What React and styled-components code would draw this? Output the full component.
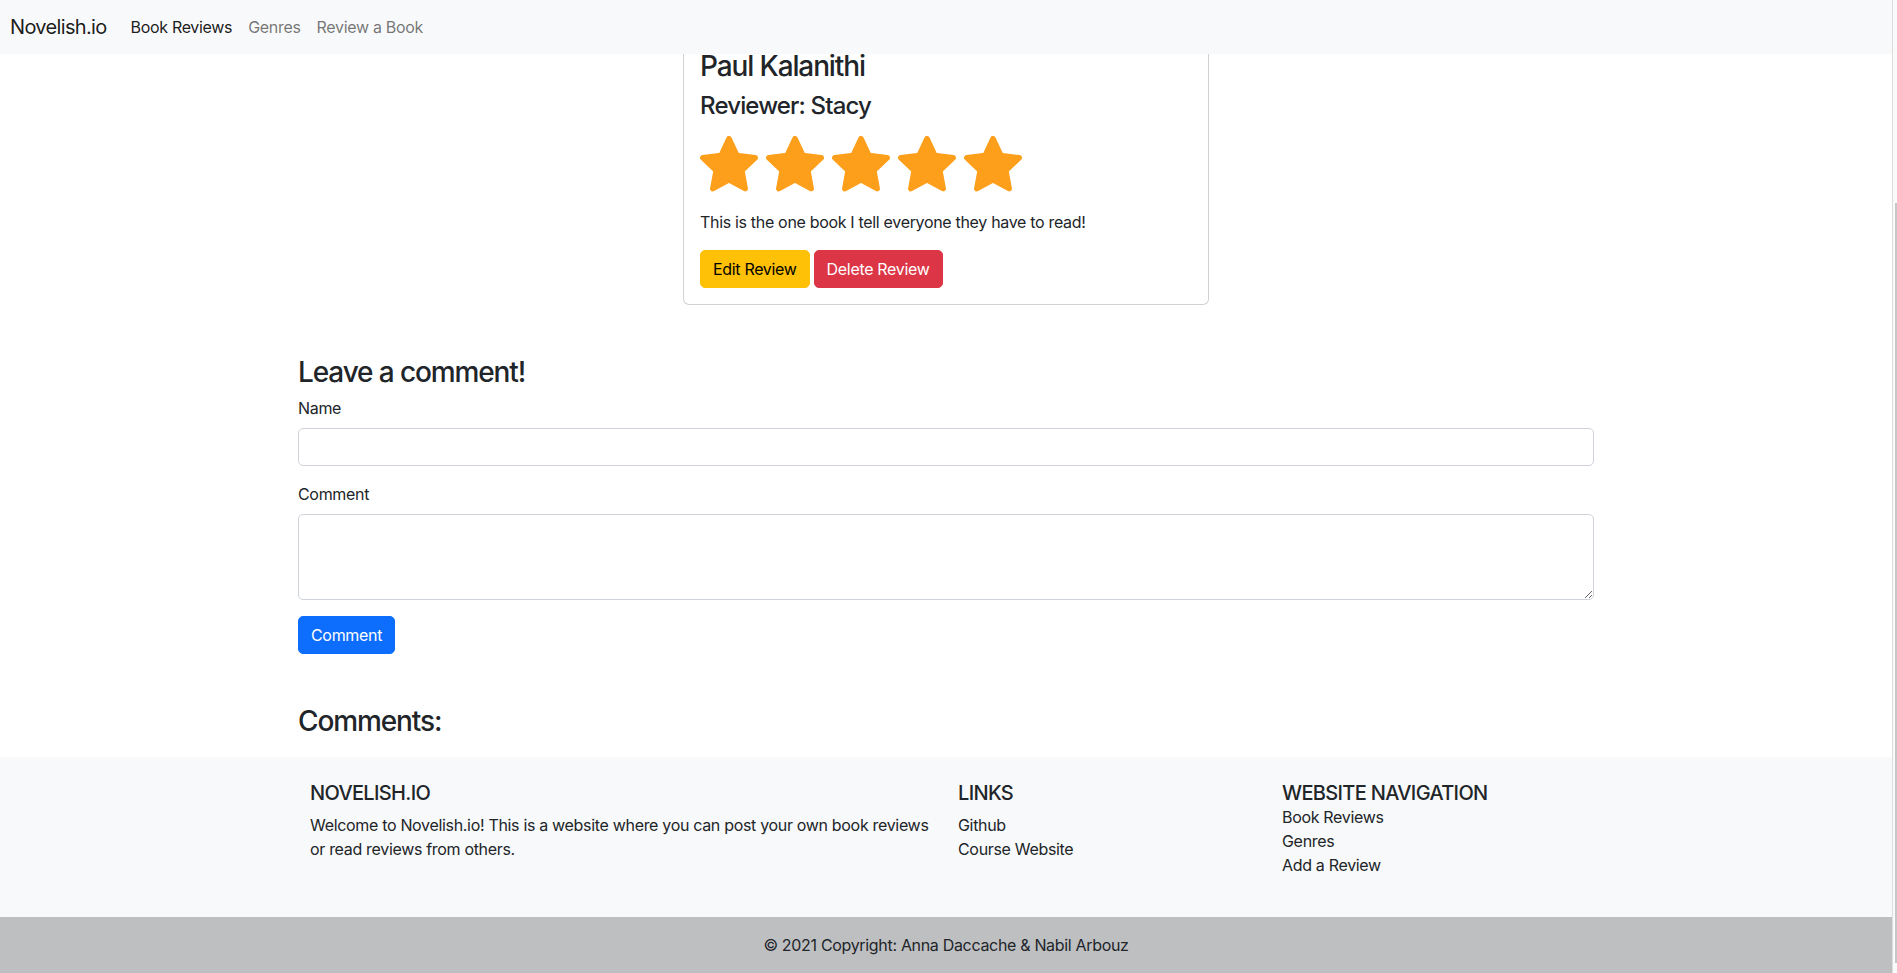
import React from 'react';
import styled, { createGlobalStyle } from 'styled-components';

const colors = {
  text: '#212529',
  light: '#f8f9fa',
  primary: '#0d6efd',
  warning: '#ffc107',
  danger: '#dc3545',
  star: '#fe9f1b',
};

const GlobalStyle = createGlobalStyle`
  *, *::before, *::after { box-sizing: border-box; }
  body {
    margin: 0;
    font-family: Inter, "Noto Sans", "Liberation Sans", sans-serif;
    font-size: 16px;
    line-height: 1.5;
    letter-spacing: -0.02em;
    color: ${colors.text};
    background: #fff;
  }
  h3, h4, h5, p, ul { margin-top: 0; }
`;

const btnColors = {
  primary: `background:${colors.primary}; border-color:${colors.primary}; color:#fff;`,
  warning: `background:${colors.warning}; border-color:${colors.warning}; color:#000;`,
  danger: `background:${colors.danger}; border-color:${colors.danger}; color:#fff;`,
};

// page shell + fake overlay scrollbar
const Shell = styled.div`
  display: flex;
  min-height: 100vh;
`;

const Page = styled.div`
  flex: 1;
  min-width: 0;
  display: flex;
  flex-direction: column;
  overflow: hidden;
`;

const ScrollTrack = styled.div`
  width: 5px;
  flex-shrink: 0;
  background: #fafafa;
  border-left: 1px solid #dcdcdc;
  display: flex;
  justify-content: flex-end;
`;

const ScrollThumb = styled.div`
  width: 2px;
  height: 760px;
  margin-top: 203px;
  background: #c6c6c6;
`;

// navbar
const Navbar = styled.nav`
  position: sticky;
  top: 0;
  z-index: 10;
  height: 54px;
  padding: 0 10px;
  display: flex;
  align-items: center;
  background: ${colors.light};
`;

const Brand = styled.a`
  font-size: 20px;
  line-height: 30px;
  letter-spacing: -0.033em;
  margin-right: 16px;
  color: rgba(0, 0, 0, 0.9);
  text-decoration: none;
`;

const NavLink = styled.a`
  padding: 0 8px;
  font-size: 16px;
  line-height: 24px;
  text-decoration: none;
  color: ${(p) => (p.$active ? 'rgba(0, 0, 0, 0.9)' : 'rgba(0, 0, 0, 0.55)')};
`;

const Main = styled.main`
  flex: 1;
`;

// review card
const CardRow = styled.div`
  display: flex;
  justify-content: center;
  margin-top: -21px;
`;

const Card = styled.div`
  width: 526px;
  padding: 16px;
  border: 1px solid rgba(0, 0, 0, 0.175);
  border-radius: 6px;
  background: #fff;
`;

const CardTitle = styled.h3`
  font-size: 28px;
  line-height: 1.2;
  font-weight: 500;
  letter-spacing: -0.04em;
  margin-bottom: 8px;
`;

const CardSub = styled.h4`
  font-size: 24px;
  line-height: 1.2;
  font-weight: 500;
  letter-spacing: -0.035em;
  margin-bottom: 8px;
`;

const Stars = styled.div`
  display: flex;
  gap: 8px;
  padding-top: 8px;
  margin-bottom: 18.5px;
`;

const StarSvg = styled.svg`
  width: 58px;
  height: 55.4px;
  display: block;
`;

const CardText = styled.p`
  margin-bottom: 16px;
`;

const BtnRow = styled.div`
  display: flex;
  gap: 4px;
`;

const Button = styled.button`
  font-family: inherit;
  font-size: 16px;
  line-height: 24px;
  letter-spacing: -0.02em;
  padding: 6px 12px;
  border: 1px solid transparent;
  border-radius: 5px;
  cursor: pointer;
  ${(p) => btnColors[p.$variant]};
`;

// comment form
const Container = styled.section`
  width: 1296px;
  margin: 51px auto 0;
`;

const Heading = styled.h3`
  font-size: 28px;
  line-height: 1.2;
  font-weight: 500;
  letter-spacing: -0.04em;
  margin-top: ${(p) => p.$top || 0}px;
  margin-bottom: 6px;
`;

const Field = styled.div`
  margin-bottom: 16px;
`;

const Label = styled.label`
  display: block;
  margin-bottom: 8px;
`;

const Input = styled.input`
  display: block;
  width: 100%;
  height: 38px;
  padding: 6px 12px;
  font: inherit;
  border: 1px solid #ced4da;
  border-radius: 5px;
  background: #fff;
`;

const TextArea = styled.textarea`
  display: block;
  width: 100%;
  height: 86px;
  padding: 6px 12px;
  font: inherit;
  border: 1px solid #ced4da;
  border-radius: 5px;
  background: #fff;
`;

// footer
const FooterWrap = styled.footer`
  background: ${colors.light};
  color: ${colors.text};
`;

const FooterGrid = styled.div`
  width: 1320px;
  margin: 0 auto;
  padding: 24px;
  display: grid;
  grid-template-columns: 624px 300px 300px;
  column-gap: 24px;
`;

const FooterTitle = styled.h5`
  font-size: 20px;
  line-height: 1.2;
  font-weight: 500;
  letter-spacing: -0.033em;
  text-transform: uppercase;
  margin-bottom: ${(p) => (p.$flush ? 0 : 8)}px;
`;

const FooterText = styled.p`
  margin-bottom: 16px;
`;

const FooterList = styled.ul`
  list-style: none;
  padding: 0;
  margin-bottom: 16px;
  a {
    color: ${colors.text};
    text-decoration: none;
  }
`;

const Copyright = styled.div`
  padding: 16px;
  text-align: center;
  background: #bebfc1;
`;

function Star() {
  return (
    <StarSvg viewBox="1.49 1 21.02 20.09" aria-hidden="true">
      <path
        d="M12 2 L14.85 8.07 L21.511 8.91 L16.66 13.52 L17.878 20.09 L12 16.9 L6.122 20.09 L7.34 13.52 L2.489 8.91 L9.15 8.07 Z"
        fill={colors.star}
        stroke={colors.star}
        strokeWidth="2"
        strokeLinejoin="round"
      />
    </StarSvg>
  );
}

function ReviewCard() {
  return (
    <CardRow>
      <Card>
        <CardTitle>Paul Kalanithi</CardTitle>
        <CardSub>Reviewer: Stacy</CardSub>
        <Stars>
          {[0, 1, 2, 3, 4].map((i) => <Star key={i} />)}
        </Stars>
        <CardText>This is the one book I tell everyone they have to read!</CardText>
        <BtnRow>
          <Button $variant="warning">Edit Review</Button>
          <Button $variant="danger">Delete Review</Button>
        </BtnRow>
      </Card>
    </CardRow>
  );
}

function CommentForm() {
  return (
    <Container>
      <Heading>Leave a comment!</Heading>
      <Field>
        <Label htmlFor="name">Name</Label>
        <Input id="name" type="text" />
      </Field>
      <Field>
        <Label htmlFor="comment">Comment</Label>
        <TextArea id="comment" rows="3" />
      </Field>
      <Button $variant="primary">Comment</Button>
      <Heading $top={51}>Comments:</Heading>
    </Container>
  );
}

function Footer() {
  return (
    <FooterWrap>
      <FooterGrid>
        <div>
          <FooterTitle>Novelish.io</FooterTitle>
          <FooterText>
            Welcome to Novelish.io! This is a website where you can post your own book reviews
            or read reviews from others.
          </FooterText>
        </div>
        <div>
          <FooterTitle>Links</FooterTitle>
          <FooterList>
            <li><a href="#">Github</a></li>
            <li><a href="#">Course Website</a></li>
          </FooterList>
        </div>
        <div>
          <FooterTitle $flush>Website Navigation</FooterTitle>
          <FooterList>
            <li><a href="#">Book Reviews</a></li>
            <li><a href="#">Genres</a></li>
            <li><a href="#">Add a Review</a></li>
          </FooterList>
        </div>
      </FooterGrid>
      <Copyright>© 2021 Copyright: Anna Daccache &amp; Nabil Arbouz</Copyright>
    </FooterWrap>
  );
}

export default function App() {
  return (
    <>
      <GlobalStyle />
      <Shell>
        <Page>
          <Navbar>
            <Brand href="#">Novelish.io</Brand>
            <NavLink href="#" $active>Book Reviews</NavLink>
            <NavLink href="#">Genres</NavLink>
            <NavLink href="#">Review a Book</NavLink>
          </Navbar>
          <Main>
            <ReviewCard />
            <CommentForm />
          </Main>
          <Footer />
        </Page>
        <ScrollTrack>
          <ScrollThumb />
        </ScrollTrack>
      </Shell>
    </>
  );
}
